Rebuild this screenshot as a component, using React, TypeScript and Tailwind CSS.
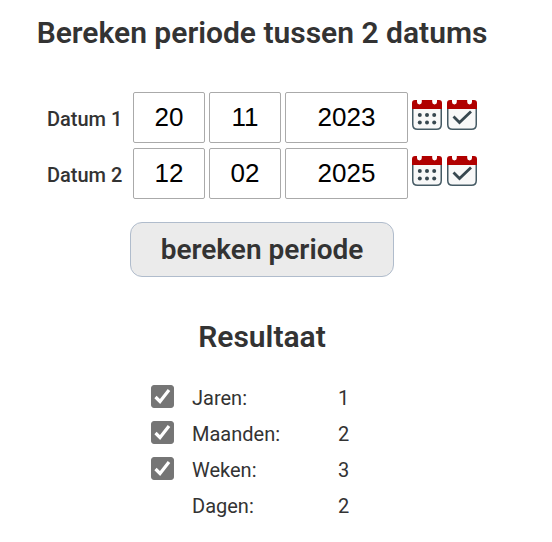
import React, { useState } from 'react';

interface DateParts {
  day: string;
  month: string;
  year: string;
}

interface DateRowProps {
  label: string;
  value: DateParts;
  onChange: (value: DateParts) => void;
}

const inputClass =
  'h-[51px] rounded-xs border border-[#aaaaaa] bg-white text-center font-["Liberation_Sans",Arial,sans-serif] text-[26px] text-black';

const CalendarIcon: React.FC<{ checked?: boolean }> = ({ checked }) => (
  <svg viewBox="0 0 30 31" className="h-[31px] w-[30px]" aria-hidden="true">
    <path
      d="M0.75 8V25.5Q0.75 30.25 5.5 30.25H24.5Q29.25 30.25 29.25 25.5V8Z"
      fill="#f8f8f8"
      stroke="#455a64"
      strokeWidth="1.5"
    />
    <path
      d="M0 10V4Q0 1 3 1H5V3Q5 5.4 7.4 5.4T9.8 3V1H20.2V3Q20.2 5.4 22.6 5.4T25 3V1H27Q30 1 30 4V10Z"
      fill="#b00000"
    />
    {checked ? (
      <path d="M6.5 17.5L12.5 23.5L24 12.5" fill="none" stroke="#37474f" strokeWidth="2.8" />
    ) : (
      <g fill="#37474f">
        <circle cx="7.8" cy="16" r="2" />
        <circle cx="15" cy="16" r="2" />
        <circle cx="22.2" cy="16" r="2" />
        <circle cx="7.8" cy="23.5" r="2" />
        <circle cx="15" cy="23.5" r="2" />
        <circle cx="22.2" cy="23.5" r="2" />
      </g>
    )}
  </svg>
);

const DateRow: React.FC<DateRowProps> = ({ label, value, onChange }) => {
  const setToday = () => {
    const now = new Date();
    onChange({
      day: String(now.getDate()).padStart(2, '0'),
      month: String(now.getMonth() + 1).padStart(2, '0'),
      year: String(now.getFullYear()),
    });
  };
  const id = label.replace(' ', '-').toLowerCase();

  return (
    <div className="flex items-center gap-1">
      <label htmlFor={id} className="w-[82px] pt-0.5 text-xl font-medium">
        {label}
      </label>
      <input
        id={id}
        className={`${inputClass} w-[72px]`}
        value={value.day}
        onChange={(e) => onChange({ ...value, day: e.target.value })}
      />
      <input
        aria-label={`${label} maand`}
        className={`${inputClass} w-[72px]`}
        value={value.month}
        onChange={(e) => onChange({ ...value, month: e.target.value })}
      />
      <input
        aria-label={`${label} jaar`}
        className={`${inputClass} w-[123px]`}
        value={value.year}
        onChange={(e) => onChange({ ...value, year: e.target.value })}
      />
      <div className="flex gap-[5px] pb-1.5">
        <button type="button" aria-label={`${label} kalender`}>
          <CalendarIcon />
        </button>
        <button type="button" aria-label={`${label} vandaag`} onClick={setToday}>
          <CalendarIcon checked />
        </button>
      </div>
    </div>
  );
};

const results = [
  { id: 'jaren', label: 'Jaren:', value: 1, optional: true },
  { id: 'maanden', label: 'Maanden:', value: 2, optional: true },
  { id: 'weken', label: 'Weken:', value: 3, optional: true },
  { id: 'dagen', label: 'Dagen:', value: 2, optional: false },
];

export default function App() {
  const [from, setFrom] = useState<DateParts>({ day: '20', month: '11', year: '2023' });
  const [to, setTo] = useState<DateParts>({ day: '12', month: '02', year: '2025' });

  return (
    <main className="flex flex-col items-center bg-white pt-[13px] pr-7 font-[Roboto,sans-serif] text-[#333333]">
      <h1 className="text-3xl leading-10 font-semibold">Bereken periode tussen 2 datums</h1>

      <form className="mt-[39px] flex flex-col items-center" onSubmit={(e) => e.preventDefault()}>
        <div className="flex flex-col gap-[5px]">
          <DateRow label="Datum 1" value={from} onChange={setFrom} />
          <DateRow label="Datum 2" value={to} onChange={setTo} />
        </div>
        <button
          type="submit"
          className="mt-[23px] h-[55px] rounded-xl border border-[#b0bccc] bg-[#ebebeb] px-[30px] text-[28px] font-semibold"
        >
          bereken periode
        </button>
      </form>

      <h2 className="mt-10 text-3xl leading-10 font-semibold">Resultaat</h2>

      <table className="mt-[23px] text-xl">
        <tbody>
          {results.map((row) => (
            <tr key={row.id} className="h-9">
              <td className="w-[41px] p-0">
                {row.optional && (
                  <div className="mb-1 grid size-[23px]">
                    <input
                      id={row.id}
                      type="checkbox"
                      defaultChecked
                      className="peer col-start-1 row-start-1 size-[23px] appearance-none rounded-[3px] border border-[#767676] bg-white checked:bg-[#757575]"
                    />
                    <svg
                      viewBox="0 0 23 23"
                      className="pointer-events-none invisible col-start-1 row-start-1 peer-checked:visible"
                      aria-hidden="true"
                    >
                      <path d="M4.5 12L9 16.5L18 5" fill="none" stroke="#ffffff" strokeWidth="3.2" />
                    </svg>
                  </div>
                )}
              </td>
              <td className="w-[146px] p-0">
                {row.optional ? <label htmlFor={row.id}>{row.label}</label> : row.label}
              </td>
              <td className="w-[35px] p-0">{row.value}</td>
            </tr>
          ))}
        </tbody>
      </table>
    </main>
  );
}
